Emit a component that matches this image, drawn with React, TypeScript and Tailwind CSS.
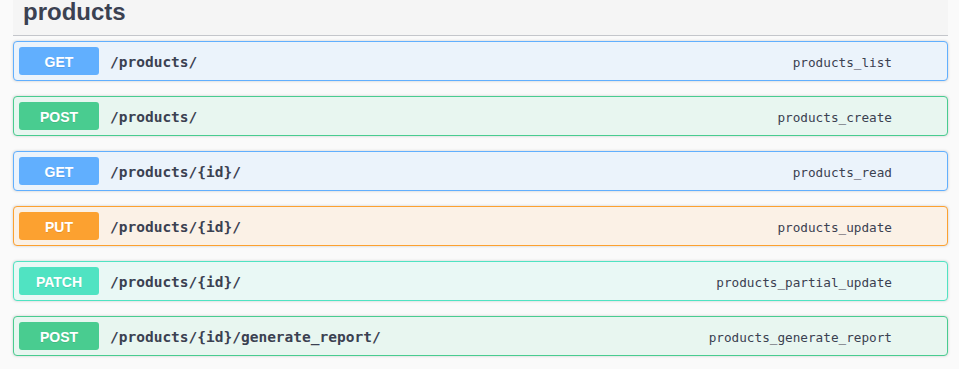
import React from "react";

type Op = { method: string; path: string; desc: string };

const ops: Op[] = [
  { method: "GET", path: "/products/", desc: "products_list" },
  { method: "POST", path: "/products/", desc: "products_create" },
  { method: "GET", path: "/products/{id}/", desc: "products_read" },
  { method: "PUT", path: "/products/{id}/", desc: "products_update" },
  { method: "PATCH", path: "/products/{id}/", desc: "products_partial_update" },
  { method: "POST", path: "/products/{id}/generate_report/", desc: "products_generate_report" },
];

const styles: Record<string, { block: string; badge: string }> = {
  GET: { block: "border-[#61affe] bg-[#ebf3fb]", badge: "bg-[#61affe]" },
  POST: { block: "border-[#49cc90] bg-[#e8f6f0]", badge: "bg-[#49cc90]" },
  PUT: { block: "border-[#fca130] bg-[#fbf1e6]", badge: "bg-[#fca130]" },
  PATCH: { block: "border-[#50e3c2] bg-[#e9f8f5]", badge: "bg-[#50e3c2]" },
};

export default function App() {
  return (
    <div className="min-h-[369px] w-[959px] bg-[#fafafa] text-[#3b4151]" style={{ fontFamily: '"Liberation Sans", Arial, sans-serif' }}>
      <div className="ml-[13px] w-[935px]">
        <div className="flex h-[36px] items-end border-b border-[#c4c6cb] bg-[#f5f5f5] pb-[8px] pl-[10px]">
          <h3 className="text-[24px] font-bold leading-[30px] text-[#3b4151]">products</h3>
        </div>
        <div className="flex flex-col gap-[15px] pt-[5px]">
          {ops.map((op, i) => {
            const s = styles[op.method];
            return (
              <div
                key={i}
                className={`flex h-[40px] items-center rounded-[4px] border shadow-[0_0_3px_rgba(0,0,0,0.19)] ${s.block}`}
              >
                <div className="flex w-full items-center pl-[5px] pr-[55px]">
                  <span
                    className={`flex h-[28px] w-[80px] items-center justify-center rounded-[3px] pt-[2px] text-[14px] font-bold text-white [text-shadow:0_1px_0_rgba(0,0,0,0.1)] ${s.badge}`}
                  >
                    {op.method}
                  </span>
                  <span
                    className="ml-[11px] pt-[4px] text-[14.5px] font-bold text-[#3b4151]"
                    style={{ fontFamily: '"DejaVu Sans Mono", monospace' }}
                  >
                    {op.path}
                  </span>
                  <span
                    className="ml-auto pt-[4px] text-[12.7px] text-[#3b4151]"
                    style={{ fontFamily: '"DejaVu Sans Mono", monospace' }}
                  >
                    {op.desc}
                  </span>
                </div>
              </div>
            );
          })}
        </div>
      </div>
    </div>
  );
}
